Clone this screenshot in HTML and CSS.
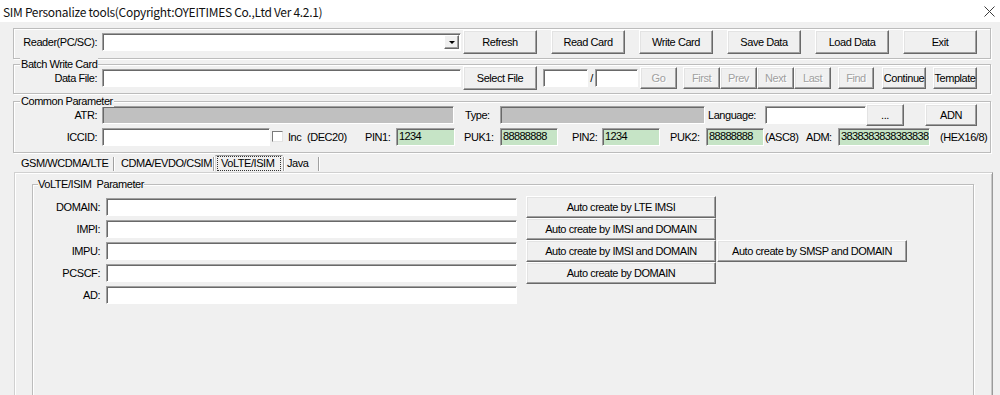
FILE: index.html
```html
<!DOCTYPE html>
<html lang="en">
<head>
    <meta charset="UTF-8">
    <meta name="viewport" content="width=device-width, initial-scale=1.0">
    <title>SIM Personalize tools</title>
    <link rel="stylesheet" href="styles.css">
</head>
<body>
    <div class="titlebar">
        <span class="title">SIM Personalize tools(Copyright:OYEITIMES Co.,Ltd Ver 4.2.1)</span>
        <svg class="close" width="11" height="11" viewBox="0 0 11 11">
            <path d="M0.5 0.5L10.5 10.5M10.5 0.5L0.5 10.5" stroke="#3c3c3c" stroke-width="1" fill="none"/>
        </svg>
    </div>

    <div class="client">
        <div class="group reader">
            <div class="row">
                <span class="lbl">Reader(PC/SC):</span>
                <div class="field combo"><span class="drop"><i></i></span></div>
                <button class="btn tool first">Refresh</button>
                <button class="btn tool">Read Card</button>
                <button class="btn tool">Write Card</button>
                <button class="btn tool">Save Data</button>
                <button class="btn tool">Load Data</button>
                <button class="btn tool">Exit</button>
            </div>
        </div>

        <div class="group batch">
            <span class="legend">Batch Write Card</span>
            <div class="row">
                <span class="lbl">Data File:</span>
                <div class="field path"></div>
                <button class="btn tool first">Select File</button>
                <div class="field num1"></div>
                <span class="slash">/</span>
                <div class="field num2"></div>
                <button class="btn nav go" disabled>Go</button>
                <button class="btn nav gap6" disabled>First</button>
                <button class="btn nav" disabled>Prev</button>
                <button class="btn nav" disabled>Next</button>
                <button class="btn nav" disabled>Last</button>
                <button class="btn nav find" disabled>Find</button>
                <button class="btn nav wide cont">Continue</button>
                <button class="btn nav wide tpl">Template</button>
            </div>
        </div>

        <div class="group common">
            <span class="legend">Common Parameter</span>
            <div class="row">
                <span class="lbl">ATR:</span>
                <div class="field ro atr"></div>
                <span class="txt type-lbl">Type:</span>
                <div class="field ro type"></div>
                <span class="txt lang-lbl">Language:</span>
                <div class="field lang"></div>
                <button class="btn small dots">...</button>
                <button class="btn small adn">ADN</button>
            </div>
            <div class="row">
                <span class="lbl">ICCID:</span>
                <div class="field iccid"></div>
                <span class="chk"></span>
                <span class="txt inc">Inc</span>
                <span class="txt dec">(DEC20)</span>
                <span class="txt pin1-lbl">PIN1:</span>
                <div class="field pin p1">1234</div>
                <span class="txt puk1-lbl">PUK1:</span>
                <div class="field pin">88888888</div>
                <span class="txt pin2-lbl">PIN2:</span>
                <div class="field pin">1234</div>
                <span class="txt puk2-lbl">PUK2:</span>
                <div class="field pin">88888888</div>
                <span class="txt asc">(ASC8)</span>
                <span class="txt adm-lbl">ADM:</span>
                <div class="field pin adm">3838383838383838</div>
                <span class="txt hex">(HEX16/8)</span>
            </div>
        </div>

        <div class="tabs">
            <span class="tab t1">GSM/WCDMA/LTE</span>
            <span class="sep"></span>
            <span class="tab t2">CDMA/EVDO/CSIM</span>
            <span class="sep"></span>
            <span class="tab on"><span class="focus">VoLTE/ISIM</span></span>
            <span class="sep"></span>
            <span class="tab t4">Java</span>
            <span class="sep"></span>
        </div>

        <div class="panel">
            <div class="group vgroup">
                <span class="legend">VoLTE/ISIM&nbsp; Parameter</span>
                <div class="vrow">
                    <span class="vlbl">DOMAIN:</span>
                    <div class="field vfield"></div>
                    <button class="btn auto">Auto create by LTE IMSI</button>
                </div>
                <div class="vrow">
                    <span class="vlbl">IMPI:</span>
                    <div class="field vfield"></div>
                    <button class="btn auto">Auto create by IMSI and DOMAIN</button>
                </div>
                <div class="vrow">
                    <span class="vlbl">IMPU:</span>
                    <div class="field vfield"></div>
                    <button class="btn auto">Auto create by IMSI and DOMAIN</button>
                    <button class="btn auto">Auto create by SMSP and DOMAIN</button>
                </div>
                <div class="vrow">
                    <span class="vlbl">PCSCF:</span>
                    <div class="field vfield"></div>
                    <button class="btn auto">Auto create by DOMAIN</button>
                </div>
                <div class="vrow">
                    <span class="vlbl">AD:</span>
                    <div class="field vfield"></div>
                </div>
            </div>
        </div>
    </div>
</body>
</html>
```

FILE: styles.css
```css
* {
    box-sizing: border-box;
}
body {
    margin: 0;
    height: 395px;
    overflow: hidden;
    background: #f0f0f0;
    font-family: "Liberation Sans", Arial, sans-serif;
    font-size: 11px;
    letter-spacing: -0.45px;
    color: #000;
}
.titlebar {
    height: 22px;
    background: #fff;
    display: flex;
    align-items: center;
    justify-content: space-between;
    padding: 0 5px 0 3px;
}
.title {
    font-family: "Noto Sans CJK SC", "Noto Sans", sans-serif;
    font-size: 12px;
    letter-spacing: -0.3px;
    color: #111;
}
.client {
    padding: 6px 0 0 13px;
}

/* group boxes */
.group {
    position: relative;
    width: 978px;
    border: 1px solid #bcbcbc;
    box-shadow: inset 1px 1px 0 #fff, 1px 1px 0 #fff;
}
.legend {
    position: absolute;
    top: -7px;
    left: 6px;
    padding: 0 1px;
    line-height: 12px;
    background: #f0f0f0;
    white-space: nowrap;
}
.reader {
    padding: 1px 0 4px;
}
.batch {
    margin-top: 5px;
    padding: 1px 0 3px;
}
.common {
    margin-top: 7px;
    padding: 2px 0 5px;
}
.row {
    display: flex;
    align-items: center;
    white-space: nowrap;
}
.reader .row, .batch .row {
    height: 24px;
}
.common .row {
    height: 22px;
}
.common .row + .row {
    height: 21px;
}
.lbl {
    width: 83px;
    margin-right: 5px;
    text-align: right;
}
.txt {
    display: inline-block;
}

/* edit boxes */
.field {
    height: 18px;
    background: #fff;
    border: 1px solid;
    border-color: #a0a0a0 #fff #fff #a0a0a0;
    box-shadow: inset 1px 1px 0 #696969;
    padding: 0 2px;
    line-height: 15px;
    white-space: nowrap;
    overflow: hidden;
}
.field.ro {
    background: #c0c0c0;
}
.field.pin {
    width: 58px;
    padding-left: 2px;
    background: #c6e4c6;
    letter-spacing: -0.65px;
}
.combo {
    width: 359px;
    display: flex;
    justify-content: flex-end;
    align-items: center;
    padding: 1px 1px 1px 0;
}
.drop {
    width: 15px;
    height: 14px;
    display: flex;
    align-items: center;
    justify-content: center;
    background: #f0f0f0;
    border: 1px solid;
    border-color: #fff #696969 #696969 #fff;
    box-shadow: inset -1px -1px 0 #a0a0a0;
}
.drop i {
    width: 0;
    height: 0;
    border-left: 3px solid transparent;
    border-right: 3px solid transparent;
    border-top: 3px solid #000;
}
.path {
    width: 359px;
}
.num1 {
    width: 45px;
    margin-left: 6px;
}
.slash {
    width: 7px;
    text-align: center;
}
.num2 {
    width: 43px;
}
.atr {
    width: 352px;
}
.type-lbl {
    width: 35px;
    margin-left: 11px;
}
.type {
    width: 205px;
}
.lang-lbl {
    width: 57px;
    margin-left: 3px;
}
.lang {
    width: 101px;
}
.iccid {
    width: 168px;
}
.chk {
    width: 11px;
    height: 11px;
    margin-left: 2px;
    background: #fff;
    border: 1px solid;
    border-color: #7a7a7a #e3e3e3 #e3e3e3 #7a7a7a;
}
.inc {
    width: 19px;
    margin-left: 5px;
}
.dec {
    width: 58px;
}
.pin1-lbl {
    width: 31px;
}
.field.p1 {
    width: 59px;
}
.puk1-lbl {
    width: 36px;
    margin-left: 9px;
}
.pin2-lbl {
    width: 30px;
    margin-left: 14px;
}
.puk2-lbl {
    width: 36px;
    margin-left: 10px;
}
.asc {
    width: 41px;
    margin-left: 1px;
}
.adm-lbl {
    width: 32px;
}
.field.adm {
    width: 92px;
}
.hex {
    margin-left: 10px;
}

/* push buttons */
.btn {
    height: 24px;
    padding: 0;
    background: #f0f0f0;
    border: 1px solid;
    border-color: #fff #696969 #696969 #fff;
    box-shadow: inset -1px -1px 0 #a0a0a0, inset 1px 1px 0 #e3e3e3;
    font: inherit;
    letter-spacing: inherit;
    color: #000;
    white-space: nowrap;
    overflow: hidden;
}
.btn:disabled {
    color: #a0a0a0;
    text-shadow: 1px 1px 0 #fff;
}
.tool {
    width: 74px;
    margin-left: 14px;
}
.tool.first {
    margin-left: 2px;
}
.nav {
    width: 37px;
    height: 22px;
}
.nav.go {
    margin-left: 2px;
}
.nav.gap6 {
    margin-left: 6px;
}
.nav.find {
    width: 36px;
    margin-left: 7px;
}
.nav.wide {
    width: 44px;
}
.nav.cont {
    margin-left: 8px;
}
.nav.tpl {
    margin-left: 7px;
}
.small {
    height: 22px;
}
.dots {
    width: 38px;
}
.adn {
    width: 52px;
    margin-left: 21px;
}

/* tab strip */
.tabs {
    display: flex;
    height: 17px;
    margin: 2px 0 0 1px;
    white-space: nowrap;
}
.tab {
    line-height: 17px;
}
.t1 {
    width: 99px;
    padding-left: 7px;
}
.t2 {
    width: 98px;
    padding-left: 6px;
}
.tab.on {
    width: 68px;
    padding: 0 1px 0 1px;
    border: 1px solid;
    border-color: #a0a0a0 #f0f0f0 #f0f0f0 #d8d8d8;
    line-height: 15px;
}
.focus {
    display: block;
    height: 15px;
    padding-left: 3px;
    border: 1px dotted #333;
    line-height: 13px;
}
.t4 {
    width: 33px;
    padding-left: 2px;
}
.sep {
    width: 2px;
    margin: 2px 0 1px;
    border-left: 1px solid #a0a0a0;
    border-right: 1px solid #fff;
}

/* tab page */
.panel {
    margin-left: 1px;
    width: 979px;
    height: 240px;
    padding: 11px 0 0 17px;
    border-top: 1px solid #d0d0d0;
    border-left: 1px solid #d0d0d0;
    border-right: 1px solid #9a9a9a;
    box-shadow: inset 1px 1px 0 #fff, inset -1px 0 0 #c8c8c8;
}
.vgroup {
    width: 942px;
    height: 220px;
    padding-top: 11px;
}
.vgroup .legend {
    left: 5px;
    padding: 0;
}
.vrow {
    display: flex;
    align-items: center;
    height: 22px;
    white-space: nowrap;
}
.vlbl {
    width: 67px;
    margin-right: 6px;
    text-align: right;
}
.vfield {
    width: 411px;
}
.auto {
    width: 190px;
    height: 22px;
    margin-left: 9px;
}
.auto + .auto {
    margin-left: 1px;
}
```
